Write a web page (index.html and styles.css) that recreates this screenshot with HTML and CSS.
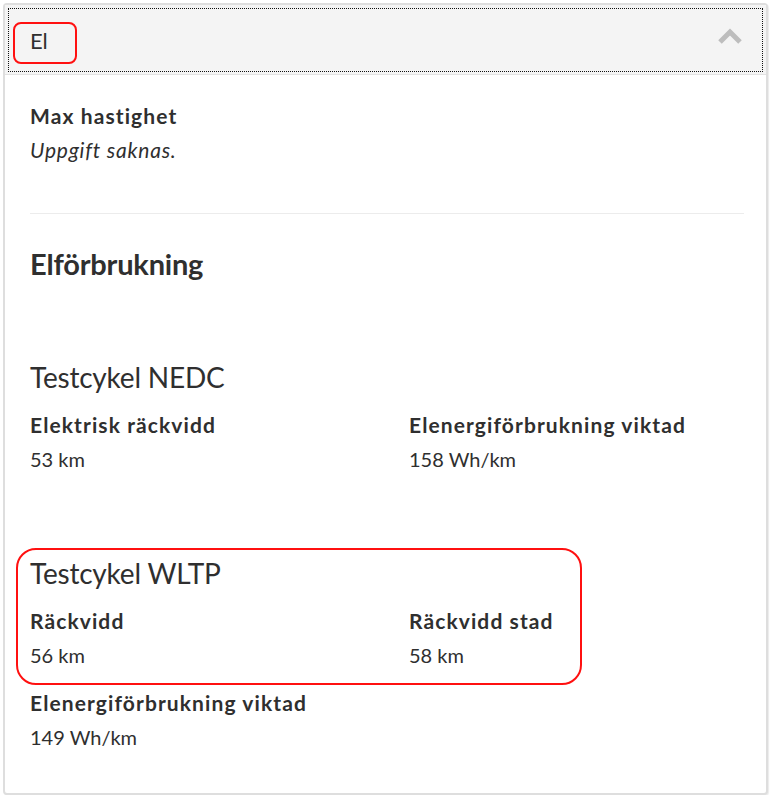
FILE: index.html
```html
<!DOCTYPE html>
<html lang="sv">
<head>
<meta charset="utf-8">
<title>El</title>
<link rel="stylesheet" href="styles.css">
</head>
<body>
<section class="panel">
  <header class="panel-head">
    <span class="panel-title">El</span>
    <svg class="chevron" width="24" height="16" viewBox="0 0 24 16" aria-hidden="true">
      <path d="M2 14 L12 4 L22 14" fill="none" stroke="#bdbdbd" stroke-width="5" stroke-linejoin="miter"/>
    </svg>
    <span class="mark mark-title"></span>
  </header>
  <div class="panel-body">
    <div class="field">
      <div class="label">Max hastighet</div>
      <div class="value missing">Uppgift saknas.</div>
    </div>
    <hr class="divider">
    <h2 class="section-title">Elförbrukning</h2>

    <div class="cycle">
      <h3 class="cycle-title">Testcykel NEDC</h3>
      <div class="grid">
        <div class="field">
          <div class="label">Elektrisk räckvidd</div>
          <div class="value">53 km</div>
        </div>
        <div class="field">
          <div class="label">Elenergiförbrukning viktad</div>
          <div class="value">158 Wh/km</div>
        </div>
      </div>
    </div>

    <div class="cycle cycle-wltp">
      <span class="mark mark-wltp"></span>
      <h3 class="cycle-title">Testcykel WLTP</h3>
      <div class="grid">
        <div class="field">
          <div class="label">Räckvidd</div>
          <div class="value">56 km</div>
        </div>
        <div class="field">
          <div class="label">Räckvidd stad</div>
          <div class="value">58 km</div>
        </div>
        <div class="field">
          <div class="label">Elenergiförbrukning viktad</div>
          <div class="value">149 Wh/km</div>
        </div>
      </div>
    </div>
  </div>
</section>
</body>
</html>
```
FILE: styles.css
```css
html, body {
  margin: 0;
  padding: 0;
  background: #ffffff;
}
body {
  font-family: Lato, "Open Sans", sans-serif;
  color: #2f2f2f;
}
.panel {
  margin: 3px 0 0 3px;
  width: 765px;
  height: 792px;
  box-sizing: border-box;
  border: 2px solid #dedede;
  border-radius: 4px;
  box-shadow: 1px 1px 1px rgba(0,0,0,0.08);
  background: #fff;
}
.panel-head {
  position: relative;
  height: 69px;
  background: #f4f4f4;
  border-bottom: 1px solid #e2e2e2;
  outline: 1px dotted #111;
  outline-offset: -4px;
  display: flex;
  align-items: center;
  justify-content: space-between;
  padding: 0 24px 0 25px;
}
.panel-title {
  font-size: 22px;
  line-height: 1;
  color: #2f2f2f;
  margin-top: 2px;
}
.chevron {
  margin-top: -8px;
}
.mark {
  position: absolute;
  border: 2px solid #ff1010;
  box-sizing: border-box;
  pointer-events: none;
}
.mark-title {
  left: 8px;
  top: 17px;
  width: 64px;
  height: 42px;
  border-radius: 8px;
}
.panel-body {
  padding: 27px 22px 0 25px;
}
.field {
  min-width: 0;
}
.label {
  font-weight: 700;
  font-size: 21px;
  letter-spacing: 1.1px;
  line-height: 28px;
}
.value {
  font-size: 20px;
  line-height: 28px;
  margin-top: 6px;
}
.value.missing {
  font-style: italic;
  font-size: 21px;
  letter-spacing: 0.8px;
  margin-top: 6px;
}
.divider {
  border: 0;
  border-top: 1px solid #ececec;
  margin: 49px 0 0;
}
.section-title {
  font-weight: 700;
  font-size: 29px;
  line-height: 36px;
  margin: 32px 0 0;
  letter-spacing: -0.2px;
}
.cycle {
  margin-top: 78px;
}
.cycle-title {
  font-weight: 400;
  font-size: 28px;
  line-height: 34px;
  margin: 0 0 17px;
  letter-spacing: -0.2px;
}
.grid {
  display: grid;
  grid-template-columns: 379px 1fr;
  row-gap: 20px;
}
.cycle-wltp {
  position: relative;
  margin-top: 83px;
}
.mark-wltp {
  left: -14px;
  top: -8px;
  width: 566px;
  height: 137px;
  border-radius: 20px;
}
```
